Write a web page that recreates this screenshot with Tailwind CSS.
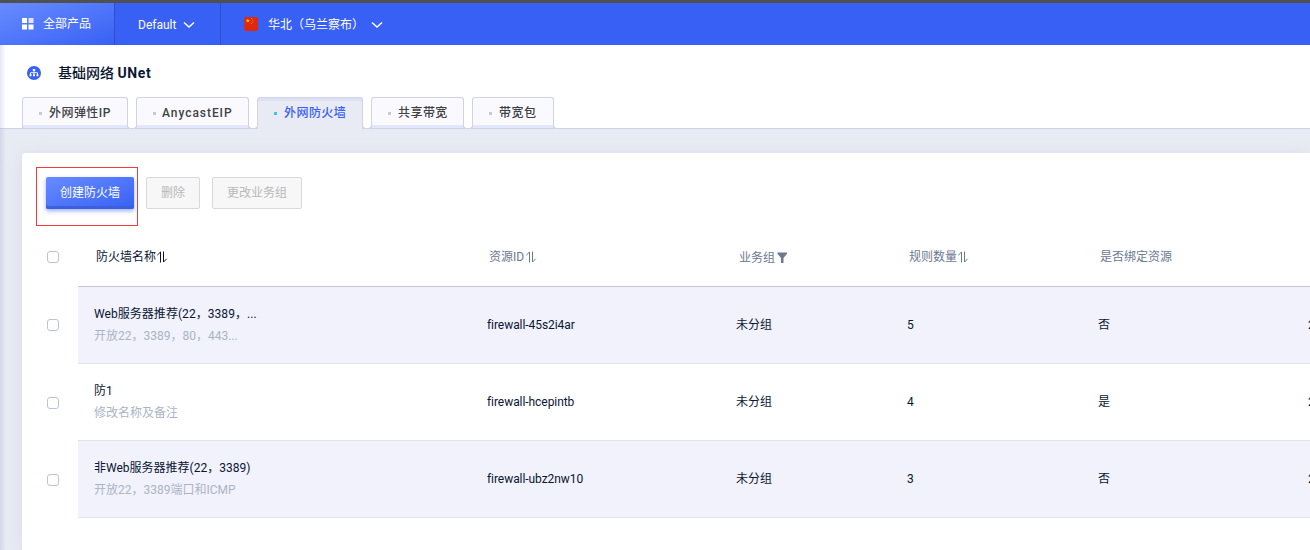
<!DOCTYPE html>
<html lang="zh-CN">
<head>
<meta charset="utf-8">
<title>基础网络 UNet</title>
<script src="https://cdn.jsdelivr.net/npm/@tailwindcss/browser@4"></script>
</head>
<body class="w-[1310px] h-[550px] overflow-hidden bg-[#e9ebf4] font-['Roboto','Noto_Sans_CJK_SC',sans-serif] text-[12px] leading-[22px] text-[#0a1633]">
<svg class="hidden">
  <symbol id="sort" viewBox="0 0 12 12"><path d="M1.300 4.200 4.500 1v10.500M7.500 .5v10.500l3.200-3.200" fill="none" stroke="currentColor" stroke-width="1"/></symbol>
  <symbol id="chev" viewBox="0 0 12 8"><path d="M1 1.500 6 6 11 1.500" fill="none" stroke="currentColor" stroke-width="1.500"/></symbol>
</svg>
<header class="h-[45px] border-t-[3px] border-[#505050] bg-[#3860f4] text-white flex leading-[42px]">
  <div class="w-[115px] border-r border-[#304fc4] bg-linear-to-br from-[#688bff] to-[#3860f4] flex items-center pl-[22px] gap-[9px]">
    <svg class="w-[12px] h-[12px]" viewBox="0 0 12 12" fill="#fff"><path d="M0 0h5v5H0zM0 6.500h5v5H0zM6.500 6.500h5v5h-5z"/><path d="M6.500 0h5v5h-5z" opacity=".8"/></svg>
    <span>全部产品</span>
  </div>
  <div class="w-[106px] border-r border-[#304fc4] flex items-center pl-[23px] gap-[7px] pt-[2px]"><span>Default</span><svg class="w-[12px] h-[8px]"><use href="#chev"/></svg></div>
  <div class="flex items-center pl-[23px]">
    <svg class="w-[14px] h-[14px] mr-[10px]" viewBox="0 0 14 14"><rect width="14" height="14" rx="2" fill="#de2910"/><path d="m3.800 1.700.6 1.300 1.400.1-1.100.9.4 1.400-1.300-.8-1.200.8.4-1.400-1.100-.9 1.400-.1z" fill="#ffde00"/><path d="M7 1h1v1H7zM8.300 2.500h1v1h-1zM8.300 4.500h1v1h-1zM7 6h1v1H7z" fill="#f08a0c"/></svg>
    <span class="w-[103px] pt-px">华北（乌兰察布）</span><svg class="w-[12px] h-[8px] mt-px"><use href="#chev"/></svg>
  </div>
</header>
<div class="relative h-[505px]">
  <div class="absolute left-0 top-0 w-[6px] h-[505px] z-10 bg-linear-to-r from-[#5064a8]/15 to-transparent"></div>
  <section class="h-[84px] bg-white border-b border-[#cfd3ea]">
    <div class="flex items-center h-[52px] pt-[4px] pl-[27px] gap-[17px]">
      <svg class="w-[14px] h-[14px]" viewBox="0 0 14 14"><circle cx="7" cy="7" r="7" fill="#3860f4"/><path d="M7 4v5M3.500 9V6.700h7V9" fill="none" stroke="#fff" stroke-width=".9"/><path d="M5.800 3h2.400v2H5.800zM2.600 8.300h1.900v1.900H2.600zM6.050 8.300h1.900v1.900h-1.900zM9.500 8.300h1.900v1.900H9.500z" fill="#fff"/></svg>
      <h1 class="text-[14px] font-medium -mt-px">基础网络 <span class="font-bold tracking-[0.6px]">UNet</span></h1>
    </div>
    <nav class="flex pl-[22px] h-[32px] font-medium text-[#3f4145] leading-[30px] tracking-[0.45px]">
      <div class="w-[106px] border border-[#cfd3ea] border-b-0 rounded-t-[3px] bg-[#fafafe] shadow-[inset_0_-3px_0_#e2e7fb] flex items-center pl-[16px] gap-[7px] mb-px"><i class="w-[3px] h-[3px] bg-[#c9cad2]"></i><span>外网弹性IP</span></div>
      <div class="relative w-[10px] h-[4px] -mx-px self-end border border-t-0 border-[#cfd3ea] rounded-b-[4px] bg-white"></div>
      <div class="w-[113px] border border-[#cfd3ea] border-b-0 rounded-t-[3px] bg-[#fafafe] shadow-[inset_0_-3px_0_#e2e7fb] flex items-center pl-[16px] gap-[6px] mb-px"><i class="w-[3px] h-[3px] bg-[#c9cad2]"></i><span class="tracking-[0.95px]">AnycastEIP</span></div>
      <div class="relative w-[10px] h-[4px] -mx-px self-end border border-t-0 border-[#cfd3ea] rounded-b-[4px] bg-white"></div>
      <div class="w-[106px] border border-[#cfd3ea] border-b-0 rounded-t-[3px] bg-[#e9ebf4] shadow-[inset_0_3px_0_#dde0f0] flex items-center pl-[16px] pb-px gap-[7px] text-[#3860f4]"><i class="w-[3px] h-[3px] bg-[#3dc8e8]"></i><span>外网防火墙</span></div>
      <div class="relative w-[10px] h-[4px] -mx-px self-end border border-t-0 border-[#cfd3ea] rounded-b-[4px] bg-white"></div>
      <div class="w-[93px] border border-[#cfd3ea] border-b-0 rounded-t-[3px] bg-[#fafafe] shadow-[inset_0_-3px_0_#e2e7fb] flex items-center pl-[16px] gap-[7px] mb-px"><i class="w-[3px] h-[3px] bg-[#c9cad2]"></i><span>共享带宽</span></div>
      <div class="relative w-[10px] h-[4px] -mx-px self-end border border-t-0 border-[#cfd3ea] rounded-b-[4px] bg-white"></div>
      <div class="w-[82px] border border-[#cfd3ea] border-b-0 rounded-t-[3px] bg-[#fafafe] shadow-[inset_0_-3px_0_#e2e7fb] flex items-center pl-[16px] gap-[7px] mb-px"><i class="w-[3px] h-[3px] bg-[#c9cad2]"></i><span>带宽包</span></div>
      <div class="relative w-[5px] h-[4px] -ml-px self-end border-l border-b border-[#cfd3ea] rounded-bl-[4px] bg-white"></div>
    </nav>
  </section>
  <main class="relative ml-[22px] mt-[24px] h-[397px] bg-white rounded-tl-[4px] shadow-[0_2px_20px_rgba(60,70,130,0.09)] pt-[24px]">
    <div class="absolute left-[14px] top-[14px] w-[102px] h-[59px] border border-[#f23c3c]"></div>
    <div class="flex pl-[24px] h-[32px] leading-[30px] text-center">
      <button class="w-[88px] mr-[12px] rounded-[2px] bg-linear-to-br from-[#688bff] to-[#3860f4] text-white shadow-[inset_0_-3px_0_#3d5fdc,0_2px_4px_rgba(56,96,244,0.5)]">创建防火墙</button>
      <button class="w-[54px] mr-[12px] rounded-[2px] bg-[#f7f7f7] border border-[#d9d9d9] text-[#b9b9b9]">删除</button>
      <button class="w-[90px] rounded-[2px] bg-[#f7f7f7] border border-[#d9d9d9] text-[#b9b9b9]">更改业务组</button>
    </div>
    <div class="mt-[17px] pt-[2px] grid grid-cols-[56px_393px_250px_171px_190px_1fr] h-[60px] items-center text-[#6b7a8f]">
      <i class="w-[12px] h-[12px] ml-[25px] border-[1.5px] border-[#b9c4dc] rounded-[3px] bg-white"></i>
      <div class="pl-[18px] flex items-center text-[#0a1633]">防火墙名称<svg class="w-[12px] h-[12px]"><use href="#sort"/></svg></div>
      <div class="pl-[18px] flex items-center">资源ID<svg class="w-[12px] h-[12px] ml-px"><use href="#sort"/></svg></div>
      <div class="pl-[18px] pt-[2px] flex items-center">业务组<svg class="w-[12px] h-[12px] ml-px" viewBox="0 0 12 12"><path d="M1.500.5h9.500v1.200L7.500 6v5H5V6L1.500 1.700z" fill="#6b7a8f"/></svg></div>
      <div class="pl-[17px] flex items-center">规则数量<svg class="w-[12px] h-[12px]"><use href="#sort"/></svg></div>
      <div class="pl-[18px]">是否绑定资源</div>
    </div>
    <div class="flex h-[78px]"><div class="w-[56px] shrink-0 pl-[25px] flex items-center"><i class="w-[12px] h-[12px] border-[1.5px] border-[#b9c4dc] rounded-[3px] bg-white"></i></div>
      <div class="grow grid grid-cols-[393px_249px_171px_191px_1fr] items-center pl-[16px] bg-[#f1f2fb] border-t border-t-[#c0c8da] border-b border-b-[#dfe3ee]">
        <div><div class="tracking-[0.05px]">Web服务器推荐(22，3389，...</div><div class="text-[#abb4c6]">开放22，3389，80，443...</div></div><div class="tracking-[-0.06px]">firewall-45s2i4ar</div><div>未分组</div><div>5</div><div class="flex"><span class="w-[210px] shrink-0">否</span><span>2</span></div>
      </div></div>
    <div class="flex h-[77px]"><div class="w-[56px] shrink-0 pl-[25px] flex items-center"><i class="w-[12px] h-[12px] border-[1.5px] border-[#b9c4dc] rounded-[3px] bg-white"></i></div>
      <div class="grow grid grid-cols-[393px_249px_171px_191px_1fr] items-center pl-[16px] border-b border-b-[#dfe3ee]">
        <div><div>防1</div><div class="text-[#abb4c6]">修改名称及备注</div></div><div class="tracking-[-0.06px]">firewall-hcepintb</div><div>未分组</div><div>4</div><div class="flex"><span class="w-[210px] shrink-0">是</span><span>2</span></div>
      </div></div>
    <div class="flex h-[77px]"><div class="w-[56px] shrink-0 pl-[25px] flex items-center"><i class="w-[12px] h-[12px] border-[1.5px] border-[#b9c4dc] rounded-[3px] bg-white"></i></div>
      <div class="grow grid grid-cols-[393px_249px_171px_191px_1fr] items-center pl-[16px] bg-[#f1f2fb] border-b border-b-[#dfe3ee]">
        <div><div>非Web服务器推荐(22，3389)</div><div class="text-[#abb4c6]">开放22，3389端口和ICMP</div></div><div class="tracking-[-0.06px]">firewall-ubz2nw10</div><div>未分组</div><div>3</div><div class="flex"><span class="w-[210px] shrink-0">否</span><span>2</span></div>
      </div></div>
  </main>
</div>
</body>
</html>
